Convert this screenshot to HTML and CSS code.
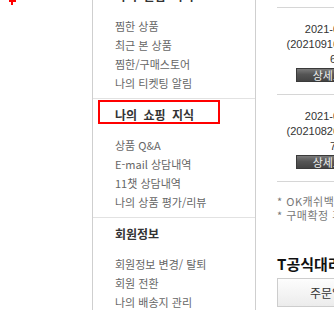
FILE: index.html
```html
<!DOCTYPE html>
<html lang="ko">
<head>
<meta charset="utf-8">
<link rel="stylesheet" href="styles.css">
</head>
<body>
<div class="page">
  <div class="left">
    <svg class="plus" width="9" height="9" viewBox="0 0 9 9"><rect x="1" y="4" width="7" height="2" fill="#f00"/><rect x="3" y="0" width="2" height="9" fill="#f00"/></svg>
  </div>
  <div class="sidebar">
    <div class="sec">
      <h3>나의 관심 목록</h3>
      <ul>
        <li>찜한 상품</li>
        <li>최근 본 상품</li>
        <li>찜한/구매스토어</li>
        <li>나의 티켓팅 알림</li>
      </ul>
    </div>
    <div class="sec">
      <h3>나의 쇼핑 지식</h3>
      <div class="mark"></div>
      <ul>
        <li>상품 Q&amp;A</li>
        <li>E-mail 상담내역</li>
        <li>11챗 상담내역</li>
        <li>나의 상품 평가/리뷰</li>
      </ul>
    </div>
    <div class="sec">
      <h3>회원정보</h3>
      <ul>
        <li>회원정보 변경/ 탈퇴</li>
        <li>회원 전환</li>
        <li>나의 배송지 관리</li>
      </ul>
    </div>
  </div>
  <div class="main">
    <div class="inner">
      <div class="order">
        <div class="col">
          <div class="ln">2021-09-16</div>
          <div class="ln">(20210916123456)</div>
          <div class="ln">6</div>
          <div class="btn">상세보기</div>
        </div>
      </div>
      <div class="order">
        <div class="col">
          <div class="ln">2021-08-26</div>
          <div class="ln">(20210826654321)</div>
          <div class="ln">7</div>
          <div class="btn">상세보기</div>
        </div>
      </div>
      <div class="notes">
        <p>* OK캐쉬백 적립은 구매확정 후 가능합니다.</p>
        <p>* 구매확정 후에는 반품/교환이 불가합니다.</p>
      </div>
      <h2 class="title">T공식대리점 구매내역</h2>
      <div class="tabbox">주문일자</div>
    </div>
  </div>
</div>
</body>
</html>
```
FILE: styles.css
```css
html, body {
  margin: 0;
  padding: 0;
  background: #fff;
  overflow: hidden;
}
.page {
  display: flex;
  width: 334px;
  height: 360px;
  margin-top: -21px;
  overflow: hidden;
  font-family: "Noto Sans CJK KR", "Noto Sans", sans-serif;
}
.left {
  box-sizing: border-box;
  width: 93px;
  flex: none;
  border-right: 1px solid #cfcfcf;
  padding: 17px 0 0 8px;
}
.plus {
  display: block;
}
.sidebar {
  box-sizing: border-box;
  width: 163px;
  flex: none;
  border-right: 1px solid #cfcfcf;
}
.sec {
  position: relative;
  border-top: 1px solid #e2e2e2;
  padding: 7px 0 5px 22px;
}
.sec h3 {
  margin: 0 0 12px;
  font-size: 12px;
  line-height: 18px;
  font-weight: bold;
  color: #333;
  word-spacing: 3px;
}
.sec ul {
  list-style: none;
  margin: 0;
  padding: 0;
}
.sec li {
  font-size: 11px;
  line-height: 19px;
  color: #666;
}
.mark {
  position: absolute;
  top: 1px;
  left: 5px;
  width: 122px;
  height: 24px;
  box-sizing: border-box;
  border: 2px solid #f00;
}
.main {
  flex: 1;
  min-width: 0;
  overflow: hidden;
  padding: 28px 0 0 21px;
}
.inner {
  width: 420px;
}
.order {
  border-top: 1px solid #d6d6d6;
  padding: 14px 0 12px;
}
.col {
  width: 112px;
  text-align: center;
  font-family: "Liberation Sans", Arial, sans-serif;
  font-size: 11px;
  line-height: 15px;
  color: #333;
}
.btn {
  box-sizing: border-box;
  width: 74px;
  height: 14px;
  margin: 1px auto 0;
  border: 1px solid #3a3a3a;
  background: linear-gradient(#7a7a7a, #555 45%, #444);
  color: #f2f2f2;
  font-family: "Noto Sans CJK KR", sans-serif;
  font-size: 11px;
  line-height: 12px;
  text-align: center;
}
.notes {
  border-top: 1px solid #d6d6d6;
  padding-top: 12px;
}
.notes p {
  margin: 0;
  font-size: 11px;
  line-height: 14px;
  letter-spacing: 0.5px;
  color: #777;
}
.title {
  margin: 32px 0 5px;
  font-size: 15px;
  line-height: 19px;
  font-weight: bold;
  color: #111;
}
.tabbox {
  box-sizing: border-box;
  height: 29px;
  width: 200px;
  border: 1px solid #cdcdcd;
  background: linear-gradient(#fdfdfd, #ececec);
  padding-left: 32px;
  font-size: 12px;
  line-height: 27px;
  color: #333;
}
```
